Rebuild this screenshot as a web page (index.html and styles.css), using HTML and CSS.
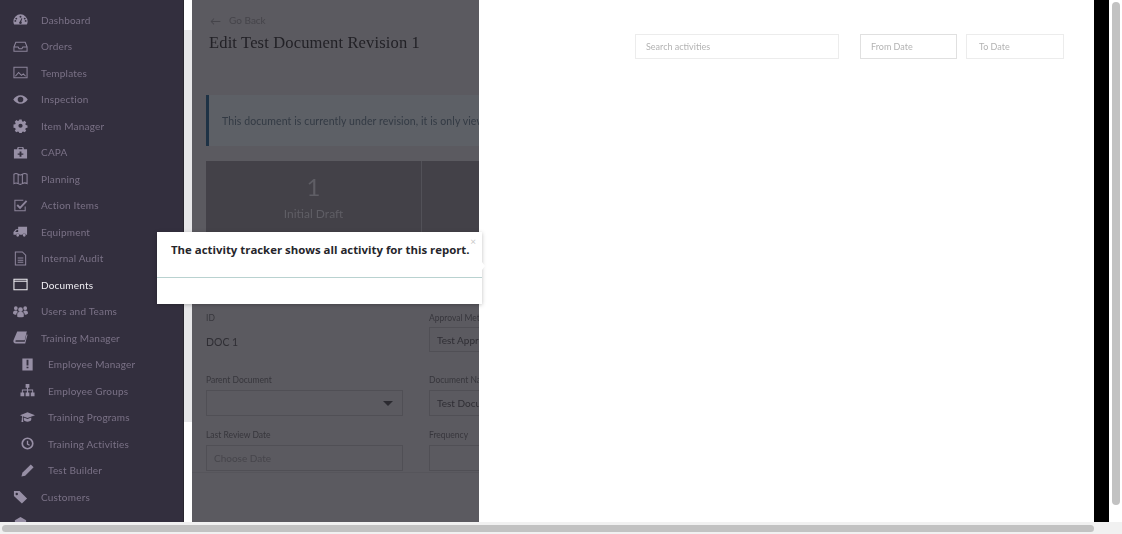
FILE: index.html
```html
<!DOCTYPE html>
<html lang="en">
<head>
<meta charset="utf-8">
<title>Edit Test Document Revision 1</title>
<link rel="stylesheet" href="styles.css">
</head>
<body>
<div class="viewport">
  <div class="main-row">
    <nav class="sidebar">
      <a class="nav-item"><svg class="ico" viewBox="0 0 16 16"><path d="M8 2.500A7.600 7.600 0 0 0 .4 10c0 1.300.3 2.300.9 3.200h13.400c.6-.9.9-1.900.9-3.200A7.600 7.600 0 0 0 8 2.500zM8 4a1 1 0 1 1 0 2 1 1 0 0 1 0-2zM3.500 6a1 1 0 1 1 0 2 1 1 0 0 1 0-2zm9 0a1 1 0 1 1 0 2 1 1 0 0 1 0-2zM2.500 10.500a1 1 0 1 1 0-2 1 1 0 0 1 0 2zm11 0a1 1 0 1 1 0-2 1 1 0 0 1 0 2zM8 12.800a1.500 1.500 0 0 1-.7-2.800l2-3.500.6.300-1.100 3.300A1.500 1.500 0 0 1 8 12.800z"/></svg><span>Dashboard</span></a>
      <a class="nav-item"><svg class="ico" viewBox="0 0 16 16"><path class="line" d="M1 8.500 3 3.500h10l2 5v4.500H1zM1 8.500h4.500l1 2h3l1-2H15"/></svg><span>Orders</span></a>
      <a class="nav-item"><svg class="ico" viewBox="0 0 16 16"><path class="line" d="M1 2.500h14v11H1z"/><path class="line" d="M2.500 12 6 8l3 3 2-1.500 2.500 2.500"/></svg><span>Templates</span></a>
      <a class="nav-item"><svg class="ico" viewBox="0 0 16 16"><path fill-rule="evenodd" d="M8 3.500c3.300 0 6 1.900 7.700 4.500C14 10.600 11.300 12.500 8 12.500S2 10.600.3 8C2 5.400 4.700 3.500 8 3.500zM8 5a3 3 0 1 0 0 6 3 3 0 0 0 0-6z"/></svg><span>Inspection</span></a>
      <a class="nav-item"><svg class="ico" viewBox="0 0 16 16"><path fill-rule="evenodd" d="M6.600 1h2.800l.4 2 1.300.6 1.700-1.100 2 2-1.100 1.700.6 1.300 2 .4v2.800l-2 .4-.6 1.300 1.100 1.700-2 2-1.700-1.100-1.300.6-.4 2H6.600l-.4-2-1.300-.6-1.700 1.100-2-2 1.100-1.700-.6-1.300-2-.4V6.900l2-.4.6-1.300-1.100-1.700 2-2 1.700 1.100 1.300-.6zM8 5.800a2.500 2.500 0 1 0 0 5 2.500 2.500 0 0 0 0-5z" transform="translate(0.800 0.800) scale(.9)"/></svg><span>Item Manager</span></a>
      <a class="nav-item"><svg class="ico" viewBox="0 0 16 16"><path fill-rule="evenodd" d="M5.500 2h5l1 1v1.500H15v10H1v-10h3.500V3zm.5 1v1.500h4V3zM7 7v2H5v1.500h2v2h2v-2h2V9H9V7z"/></svg><span>CAPA</span></a>
      <a class="nav-item"><svg class="ico" viewBox="0 0 16 16"><path class="line" d="M1 3.500c1.500-1 3-1 4.500 0s3 1 4.500 0 3.500-1 5 0v10c-1.500-1-3.500-1-5 0s-3 1-4.500 0-3-1-4.500 0zM5.500 3.500v10M10 3.500v10"/></svg><span>Planning</span></a>
      <a class="nav-item"><svg class="ico" viewBox="0 0 16 16"><path class="line" d="M13 9v4.500H2v-11h9"/><path class="line thick" d="m4.500 7.500 3 3L14.500 3"/></svg><span>Action Items</span></a>
      <a class="nav-item"><svg class="ico" viewBox="0 0 16 16"><path fill-rule="evenodd" d="M5.500 3H15v8.500h-1.100a2 2 0 0 0-3.800 0H6.900a2 2 0 0 0-3.800 0H.5V8.500L3 5.500h2.500zM4 6.500 2.300 8.500h3.200v-2zM5 10.500a1.500 1.500 0 1 1 0 3 1.500 1.500 0 0 1 0-3zm7 0a1.500 1.500 0 1 1 0 3 1.500 1.500 0 0 1 0-3z"/></svg><span>Equipment</span></a>
      <a class="nav-item"><svg class="ico" viewBox="0 0 16 16"><path class="line" d="M2.500 1h7.500l3.500 3.500V15h-11z"/><path class="line" d="M5 7.500h6M5 9.800h6M5 12h6"/></svg><span>Internal Audit</span></a>
      <a class="nav-item active"><svg class="ico" viewBox="0 0 16 16"><path class="line" d="M1 2.500h14v11H1z"/><path class="line" d="M1 4.500h14"/></svg><span>Documents</span></a>
      <a class="nav-item"><svg class="ico" viewBox="0 0 16 16"><path d="M8 3.500a2.500 2.500 0 1 1 0 5 2.500 2.500 0 0 1 0-5zM3 2.500a2 2 0 1 1 0 4 2 2 0 0 1 0-4zm10 0a2 2 0 1 1 0 4 2 2 0 0 1 0-4zM4.500 13.500V11c0-1.500 1-2.500 2-2.500h3c1 0 2 1 2 2.500v2.500c-2 1-5 1-7 0zM0 10c0-2 1-3 2.500-3H4c.3.700.7 1.200 1.300 1.500-1 .6-1.800 1.500-1.800 3-1.500 0-2.700-.5-3.500-1.500zm16 0c-.8 1-2 1.500-3.500 1.500 0-1.500-.8-2.400-1.800-3C11.300 8.200 11.700 7.700 12 7h1.500C15 7 16 8 16 10z"/></svg><span>Users and Teams</span></a>
      <a class="nav-item"><svg class="ico" viewBox="0 0 16 16"><path d="M4.500 1.500H15l-.5 1L12.500 11H3.500C2.500 11 2 12 3 12.500h9.500l2-8 1 .500-2.500 9.500H3c-2 0-3-1.500-2.500-3.500z"/></svg><span>Training Manager</span></a>
      <a class="nav-item sub"><svg class="ico" viewBox="0 0 16 16"><path fill-rule="evenodd" d="M2.500 1.500h11v13h-11zM7 3v6h2V3zm0 7.500V12h2v-1.500z"/></svg><span>Employee Manager</span></a>
      <a class="nav-item sub"><svg class="ico" viewBox="0 0 16 16"><path d="M6 1h4v4H8.600v2H14v3h1.500v4h-4v-4H13V8H8.600v2H10v4H6v-4h1.400V8H3v2h1.500v4h-4v-4H2V7h5.400V5H6z"/></svg><span>Employee Groups</span></a>
      <a class="nav-item sub"><svg class="ico" viewBox="0 0 16 16"><path d="M0 5.500 8 2.500l8 3-8 3-5-1.900v2.100c.4.300.4.800.1 1.100l.5 3H1.500l.5-3c-.3-.3-.3-.8.100-1.100V6.300zM4 8l4 1.500L12 8v2.500c0 1.100-2 2-4 2s-4-.9-4-2z"/></svg><span>Training Programs</span></a>
      <a class="nav-item sub"><svg class="ico" viewBox="0 0 16 16"><path fill-rule="evenodd" d="M8 1.500a6.500 6.500 0 1 1 0 13 6.500 6.500 0 0 1 0-13zM8 3.300a4.700 4.700 0 1 0 0 9.400 4.700 4.700 0 0 0 0-9.400zM7.300 5h1.400v3.200l1.900 1.100-.7 1.200-2.600-1.500z"/></svg><span>Training Activities</span></a>
      <a class="nav-item sub"><svg class="ico" viewBox="0 0 16 16"><path d="M11.500 1.500l3 3L5.500 13.500 1.500 14.500l1-4z"/></svg><span>Test Builder</span></a>
      <a class="nav-item"><svg class="ico" viewBox="0 0 16 16"><path fill-rule="evenodd" d="M1 2h6l8 8-5.500 5.500-8.500-8zM4 4a1.300 1.300 0 1 0 0 2.600A1.300 1.300 0 0 0 4 4z"/></svg><span>Customers</span></a>
      <a class="nav-item"><svg class="ico" viewBox="0 0 16 16"><path d="M8 1l6 3.500v7L8 15l-6-3.500v-7z"/></svg><span></span></a>
    </nav>

    <div class="side-track"><div class="side-thumb"></div></div>

    <section class="content">
      <div class="back-link"><span class="arrow">&larr;</span><span>Go Back</span></div>
      <h1 class="page-title">Edit Test Document Revision 1</h1>
      <div class="notice">This document is currently under revision, it is only viewable by approvers and cannot be edited.</div>
      <div class="steps">
        <div class="step"><div class="step-num">1</div><div class="step-name">Initial Draft</div></div>
        <div class="step"></div>
      </div>
      <div class="form-area">
        <div class="form-grid">
          <div class="field"><label class="field-label">ID</label><div class="field-value">DOC 1</div></div>
          <div class="field"><label class="field-label">Approval Method</label><div class="box first">Test Approval</div></div>
          <div class="field"><label class="field-label">Parent Document</label><div class="box select"><span class="caret"></span></div></div>
          <div class="field"><label class="field-label">Document Name</label><div class="box">Test Document</div></div>
          <div class="field"><label class="field-label">Last Review Date</label><div class="box placeholder">Choose Date</div></div>
          <div class="field"><label class="field-label">Frequency</label><div class="box"></div></div>
        </div>
      </div>
    </section>

    <section class="activity">
      <div class="act-input act-search">Search activities</div>
      <div class="act-input act-from">From Date</div>
      <div class="act-input act-to">To Date</div>
    </section>

    <div class="black-strip"></div>
    <div class="v-track"><div class="v-thumb"></div></div>

    <div class="popover">
      <div class="pop-body">
        <span class="pop-close">&times;</span>
        <p class="pop-text">The activity tracker shows all activity for this report.</p>
      </div>
      <div class="pop-foot"></div>
      <span class="pop-arrow"></span>
    </div>
  </div>
  <div class="h-track"><div class="h-thumb"></div></div>
</div>
</body>
</html>
```
FILE: styles.css
```css
* { box-sizing: border-box; }
html, body { margin: 0; padding: 0; height: 100%; overflow: hidden; background: #fff; }
body { font-family: "Lato", "Liberation Sans", sans-serif; }

.viewport { width: 1122px; height: 534px; display: flex; flex-direction: column; overflow: hidden; }
.main-row { position: relative; height: 522px; display: flex; flex: none; }

/* sidebar */
.sidebar { width: 184px; flex: none; height: 522px; background: #332f3e; border-right: 1px solid #29262f; overflow: hidden; padding-top: 6.700px; }
.nav-item { display: flex; align-items: center; height: 26.500px; padding-left: 13px; color: #7b7287; font-size: 10px; letter-spacing: .2px; filter: blur(.5px); }
.nav-item.sub { padding-left: 20px; }
.nav-item span { margin-left: 13px; white-space: nowrap; }
.nav-item.active { color: #f1eff4; }
.ico { width: 15px; height: 15px; flex: none; fill: #978fa5; }
.ico .line { fill: none; stroke: #8d859b; stroke-width: 1.1; }
.ico .thick { stroke-width: 2; }
.nav-item.active .ico .line { stroke: #f1eff4; }

/* narrow scrollbar beside the sidebar */
.side-track { width: 8px; flex: none; height: 522px; background: #fff; padding-top: 30px; }
.side-thumb { height: 392px; background: #e7e7e9; }

/* dimmed page */
.content { width: 287px; flex: none; height: 522px; overflow: hidden; background: #5b5a60; padding: 13px 0 0 14px; color: #2e2d33; filter: blur(.5px); }
.back-link { display: flex; align-items: center; gap: 8px; height: 14px; padding-left: 4px; font-size: 10px; color: #45444a; }
.arrow { font-size: 11px; }
.page-title { margin: 6px 0 0 3px; font-family: "Liberation Serif", serif; font-weight: 400; font-size: 16.500px; line-height: 20px; letter-spacing: .15px; color: #222126; white-space: nowrap; }
.notice { width: 340px; height: 51px; margin-top: 42px; background: #5d6066; border-left: 3px solid #1e3245; padding-left: 13px; display: flex; align-items: center; font-size: 10.500px; color: #333a44; white-space: nowrap; overflow: hidden; letter-spacing: .1px; }
.steps { display: flex; height: 72px; width: 500px; margin-top: 15px; background: #434148; }
.step { flex: none; width: 216px; text-align: center; border-right: 1px solid #525158; color: #5f5e65; }
.step-num { font-size: 24px; line-height: 28px; margin-top: 12px; }
.step-name { font-size: 12px; line-height: 14px; margin-top: 6px; }
.form-area { margin: 0 0 0 -14px; padding: 80px 0 0 14px; width: 287px; height: 240px; border-bottom: 1px solid #56555b; overflow: hidden; }
.form-grid { display: grid; grid-template-columns: 197px 197px; column-gap: 26px; grid-template-rows: 62px 55px 55px; width: 420px; }
.field-label { display: block; font-size: 8.500px; line-height: 11px; color: #37363c; white-space: nowrap; }
.field-value { margin-top: 12px; font-size: 10.500px; color: #2f2e34; }
.box { position: relative; height: 26px; margin-top: 4px; border: 1px solid #504f55; padding-left: 7px; display: flex; align-items: center; font-size: 10px; color: #2f2e34; white-space: nowrap; }
.box.first { margin-top: 3px; height: 25px; }
.box.placeholder { color: #46454b; }
.caret { position: absolute; right: 9px; top: 10px; border: 5px solid transparent; border-top: 5px solid #2b2a30; border-bottom: 0; }

/* white activity panel */
.activity { width: 615px; flex: none; height: 522px; background: #fff; display: flex; align-items: flex-start; padding: 34px 30px 0 156px; filter: blur(.5px); }
.act-input { height: 25px; border: 1px solid #ececec; display: flex; align-items: center; font-size: 9px; color: #b3b3b3; padding-left: 10px; }
.act-search { width: 204px; }
.act-from { width: 97px; margin-left: 21px; border-color: #e0e0e0; }
.act-to { width: 98px; margin-left: 9px; padding-left: 12px; }

.black-strip { width: 15px; flex: none; height: 522px; background: #000; }
.v-track { width: 13px; flex: none; height: 522px; background: #fff; padding: 2px 2px 0 3px; }
.v-thumb { height: 503px; background: #c2c2c2; border-radius: 4px; }

.h-track { flex: none; height: 12px; background: #f1f1f1; padding: 3px 28px 2px 2px; }
.h-thumb { height: 7px; background: #c2c2c2; border-radius: 4px; }

/* popover */
.popover { position: absolute; left: 157px; top: 232px; width: 325px; height: 72px; background: #fff; box-shadow: 0 1px 4px rgba(0,0,0,.25); display: flex; flex-direction: column; }
.pop-body { position: relative; height: 46px; border-bottom: 1px solid #b9d2d0; padding: 10px 0 0 14px; }
.pop-text { margin: 0; font-family: "Open Sans", "Liberation Sans", sans-serif; font-weight: 700; font-size: 11.400px; line-height: 16px; color: #26262b; white-space: nowrap; }
.pop-close { position: absolute; right: 6px; top: 3px; font-size: 10px; line-height: 12px; color: #c9c9c9; }
.pop-foot { flex: 1; }
.pop-arrow { position: absolute; left: 100%; top: 30px; border: 4px solid transparent; border-left: 3px solid #fff; border-right: 0; }
```
